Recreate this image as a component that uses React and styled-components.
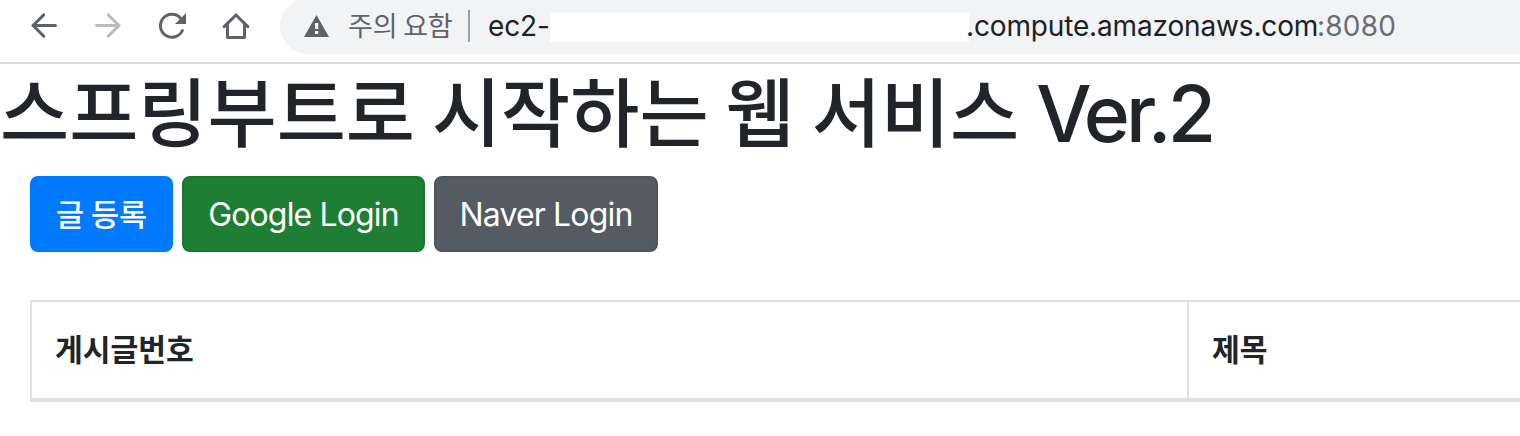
import React from "react";
import styled, { createGlobalStyle } from "styled-components";

function BackIcon() {
    return (
        <Icon viewBox="0 0 32 32">
            <path d="M27.5 15.5H5.5M15.7 4.9L5.1 15.5L15.7 26.1" strokeLinejoin="miter" />
        </Icon>
    );
}

function ForwardIcon() {
    return (
        <Icon viewBox="0 0 32 32" $disabled>
            <path d="M4.5 15.5H26.5M16.3 4.9L26.9 15.5L16.3 26.1" strokeLinejoin="miter" />
        </Icon>
    );
}

function ReloadIcon() {
    return (
        <Icon viewBox="0 0 32 32">
            <path d="M26.4 20.5A11.5 11.5 0 1 1 24.4 8" />
            <path d="M30 3V14H19Z" fill="currentColor" stroke="none" />
        </Icon>
    );
}

function HomeIcon() {
    return (
        <Icon viewBox="0 0 32 32">
            <path d="M4.2 16.6L16 5L27.8 16.6" strokeLinejoin="miter" />
            <path d="M7.5 14V27.5H24.5V14" />
        </Icon>
    );
}

function App() {
    return (
        <>
            <GlobalStyle />
            <Toolbar>
                <NavButtons>
                    <BackIcon />
                    <ForwardIcon />
                    <ReloadIcon />
                    <HomeIcon />
                </NavButtons>
                <AddressBar>
                    <WarningIcon viewBox="0 0 26 22">
                        <path d="M12.5 0L25 22H0Z" fill="#5f6368" />
                        <path d="M11 8H14.3V14H11ZM11 16H14.3V19H11Z" fill="#f1f3f4" />
                    </WarningIcon>
                    <Security>주의 요함</Security>
                    <Divider />
                    <Host $width={62}>ec2-</Host>
                    <Hidden />
                    <Host $width={351}>.compute.amazonaws.com</Host>
                    <Port>:8080</Port>
                </AddressBar>
            </Toolbar>
            <Title>
                스프링부트로 시작하는 웹 서비스 <Version>Ver.2</Version>
            </Title>
            <Content>
                <Actions>
                    <Button $color="#007bff" $border="#007bff" $width={143} $korean>글 등록</Button>
                    <Button $color="#1e7e34" $border="#1c7430" $width={243}>Google Login</Button>
                    <Button $color="#545b62" $border="#4e555b" $width={224}>Naver Login</Button>
                </Actions>
                <TableHead>
                    <HeadCell>게시글번호</HeadCell>
                    <HeadCell>제목</HeadCell>
                </TableHead>
            </Content>
        </>
    );
}

const GlobalStyle = createGlobalStyle`
  * {
    box-sizing: border-box;
  }
  body {
    margin: 0;
    overflow: hidden;
    background: #fff;
    color: #212529;
    font-family: Inter, "Noto Sans CJK KR", sans-serif;
  }
`;

const Toolbar = styled.div`
  display: flex;
  align-items: flex-start;
  height: 64px;
  overflow: hidden;
  border-bottom: 2px solid #dadcdc;
`;

const NavButtons = styled.nav`
  display: flex;
  flex: none;
  gap: 32px;
  width: 280px;
  padding: 10px 0 0 28px;
`;

const Icon = styled.svg`
  flex: none;
  width: 32px;
  height: 32px;
  fill: none;
  stroke: currentColor;
  stroke-width: 3;
  stroke-linecap: round;
  stroke-linejoin: round;
  color: ${({ $disabled }) => ($disabled ? "#babcbe" : "#5f6368")};
`;

const AddressBar = styled.div`
  display: flex;
  flex: 1;
  align-items: center;
  height: 56px;
  margin-top: -2px;
  padding-left: 24px;
  border-radius: 28px 0 0 28px;
  background: #f1f3f4;
  font-size: 28px;
  letter-spacing: -0.15px;
  white-space: nowrap;
`;

const WarningIcon = styled.svg`
  flex: none;
  width: 26px;
  height: 22px;
`;

const Security = styled.span`
  flex: none;
  width: 120px;
  margin-left: 18px;
  padding-bottom: 2px;
  font-family: "Noto Sans CJK KR", sans-serif;
  font-size: 27px;
  letter-spacing: -0.2px;
  line-height: 40px;
  color: #5f6368;
`;

const Divider = styled.span`
  flex: none;
  width: 2px;
  height: 32px;
  margin-right: 18px;
  background: #9aa0a6;
`;

const Host = styled.span`
  flex: none;
  width: ${({ $width }) => $width}px;
  color: #202124;
`;

const Hidden = styled.span`
  flex: none;
  width: 419px;
  height: 29px;
  margin: 3px -3px 0 0;
  background: #fff;
`;

const Port = styled.span`
  letter-spacing: 0.2px;
  color: #6b6e72;
`;

const Title = styled.h1`
  height: 96px;
  margin: -3px 0 19px;
  font-family: "Noto Sans CJK KR", sans-serif;
  font-size: 75.2px;
  font-weight: 500;
  line-height: 96px;
  white-space: nowrap;
`;

const Version = styled.span`
  position: relative;
  top: 1px;
  font-family: Inter, sans-serif;
  font-size: 78.5px;
  font-weight: 550;
  letter-spacing: -3.8px;
`;

const Content = styled.main`
  padding-left: 30px;
`;

const Actions = styled.div`
  display: flex;
  gap: 9px;
  margin-bottom: 48px;
`;

const Button = styled.button`
  width: ${({ $width }) => $width}px;
  height: 76px;
  padding: ${({ $korean }) => ($korean ? "0 0 3px" : "0")};
  border: 2px solid ${({ $border }) => $border};
  border-radius: 8px;
  background: ${({ $color }) => $color};
  color: #fff;
  font-family: ${({ $korean }) => ($korean ? '"Noto Sans CJK KR"' : "Inter")}, sans-serif;
  font-size: ${({ $korean }) => ($korean ? 30.5 : 32)}px;
  font-weight: ${({ $korean }) => ($korean ? 500 : 400)};
  letter-spacing: ${({ $korean }) => ($korean ? 0 : "-0.85px")};
  white-space: nowrap;
`;

const TableHead = styled.div`
  display: grid;
  grid-template-columns: 1157px 1fr;
  height: 102px;
  border: 2px solid #dee2e6;
  border-width: 2px 0 4px 2px;
`;

const HeadCell = styled.div`
  padding: 22px 23px 0;
  font-family: "Noto Sans CJK KR", sans-serif;
  font-size: 30.2px;
  font-weight: 700;
  line-height: 48px;

  &:first-child {
    border-right: 2px solid #dee2e6;
  }
`;

export default App;
